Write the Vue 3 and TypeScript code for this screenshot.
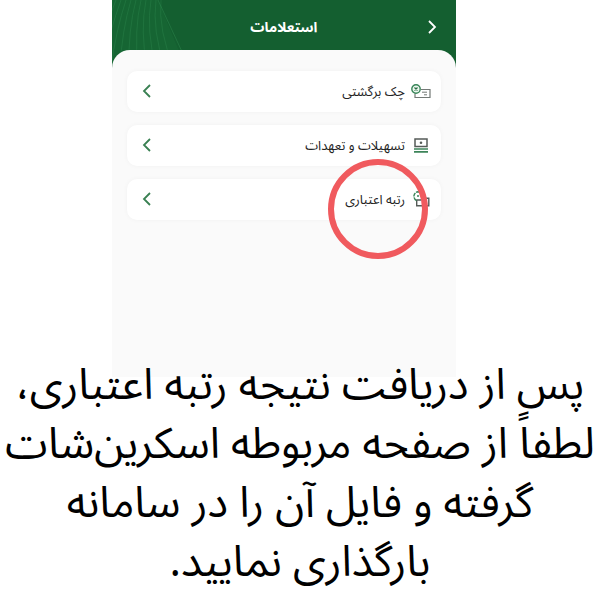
<script setup lang="ts">
type IconName = 'cheque' | 'facilities' | 'rating'

interface Inquiry {
  label: string
  icon: IconName
  highlighted: boolean
}

const inquiries: Inquiry[] = [
  { label: 'چک برگشتی', icon: 'cheque', highlighted: false },
  { label: 'تسهیلات و تعهدات', icon: 'facilities', highlighted: false },
  { label: 'رتبه اعتباری', icon: 'rating', highlighted: true },
]

const rays: number[] = Array.from({ length: 12 }, (_, i) => i)
</script>

<template>
  <main class="guide" dir="rtl" lang="fa">
    <section class="phone">
      <header class="bar">
        <svg class="rays" viewBox="0 0 80 68" aria-hidden="true">
          <path d="M0 0H46L74 68H0Z" fill="#1f7a42" fill-opacity=".22" />
          <path
            v-for="i in rays"
            :key="i"
            :d="`M${49 - i * 5} 0Q${46 - i * 6} 30 ${62 - i * 9} 68`"
            fill="none"
            stroke="#3a9a5c"
            stroke-opacity=".26"
          />
          <path d="M46 0L72 56" stroke="#3a9a5c" stroke-opacity=".35" />
        </svg>
        <button class="back" type="button" aria-label="بازگشت">
          <svg width="10" height="16" viewBox="0 0 10 16" aria-hidden="true">
            <path d="M2 2L8 8L2 14" fill="none" stroke="#fff" stroke-width="1.8" />
          </svg>
        </button>
        <h1 class="title">استعلامات</h1>
      </header>

      <nav class="sheet">
        <div v-for="item in inquiries" :key="item.icon" class="entry">
          <a class="card" href="#">
            <svg v-if="item.icon === 'cheque'" class="icon" viewBox="0 0 20 18" aria-hidden="true">
              <path d="M10 7.5H19V15.5H4V11.5" fill="none" stroke="#737976" stroke-width="1.2" />
              <path d="M11 10.2H16M13 12.8H16" stroke="#737976" />
              <circle cx="5" cy="7" r="4.2" fill="#eef8f0" stroke="#388558" stroke-width="1.4" />
              <path d="M3.5 5.5L6.5 8.5M6.5 5.5L3.5 8.5" stroke="#286b43" stroke-width="1.2" />
            </svg>
            <svg v-else-if="item.icon === 'facilities'" class="icon" viewBox="0 0 20 18" aria-hidden="true">
              <rect x="4" y="3" width="12" height="7.5" fill="none" stroke="#555b58" stroke-width="1.5" />
              <circle cx="10" cy="6.7" r="1.3" fill="#555b58" />
              <path d="M3 13H17M3 15.8H17" stroke="#3d8459" stroke-width="1.7" />
            </svg>
            <svg v-else class="icon" viewBox="0 0 20 18" aria-hidden="true">
              <path d="M5.7 9.5V15.8H17.8V8.2H11.5L10 10H6" fill="none" stroke="#555b58" stroke-width="1.4" />
              <path
                d="M5.5 10.5A4.6 4.6 0 0 1 7 1.8A4.6 4.6 0 0 1 11.6 6.5"
                fill="none"
                stroke="#388558"
                stroke-width="1.4"
                stroke-dasharray="4 0.8"
              />
              <circle cx="7" cy="6" r="1" fill="#388558" />
            </svg>
            <span class="label">{{ item.label }}</span>
            <svg class="chevron" width="10" height="16" viewBox="0 0 10 16" aria-hidden="true">
              <path d="M8 2L2 8L8 14" fill="none" stroke="#398052" stroke-width="1.8" />
            </svg>
          </a>
          <span v-if="item.highlighted" class="ring"></span>
        </div>
      </nav>
    </section>

    <p class="caption">
      پس از دریافت نتیجه رتبه اعتباری،<br />
      لطفاً از صفحه مربوطه اسکرین‌شات<br />
      گرفته و فایل آن را در سامانه<br />
      بارگذاری نمایید.
    </p>
  </main>
</template>

<style>
body {
  background: #fff;
}
</style>

<style scoped>
.guide {
  font-family: 'Noto Sans', 'Noto Sans Arabic', sans-serif;
  color: #000;
}

.phone {
  width: 57.4%;
  margin-right: 24%;
  background: linear-gradient(#145f30 0 100px, #fafafa 100px);
}

.bar {
  position: relative;
  display: grid;
  grid-template-columns: 48px 1fr 48px;
  align-items: center;
  height: 50px;
  padding-top: 4px;
  box-sizing: border-box;
}

.rays {
  position: absolute;
  left: 0;
  top: 0;
  width: 80px;
  height: 68px;
}

.back {
  display: flex;
  justify-content: center;
  padding: 0;
  border: 0;
  background: none;
  cursor: pointer;
}

.title {
  margin: 0;
  text-align: center;
  font-size: 14px;
  line-height: 24px;
  font-weight: 700;
  color: #fff;
}

.sheet {
  position: relative;
  display: flex;
  flex-direction: column;
  gap: 13px;
  min-height: 327px;
  padding: 21px 15px;
  box-sizing: border-box;
  border-radius: 18px 18px 0 0;
  background: #fafafa;
}

.entry {
  position: relative;
}

.card {
  display: flex;
  align-items: center;
  gap: 6px;
  height: 41px;
  padding: 0 10px 2px 15px;
  box-sizing: border-box;
  border-radius: 10px;
  background: #fff;
  box-shadow: 0 0 5px rgba(0, 0, 0, 0.04);
  color: #222;
  text-decoration: none;
}

.icon {
  width: 20px;
  height: 18px;
}

.label {
  flex: 1;
  font-size: 13px;
  line-height: 20px;
}

.ring {
  position: absolute;
  top: -20px;
  right: 13px;
  width: 100px;
  height: 100px;
  box-sizing: border-box;
  border: 6px solid #f05a5e;
  border-radius: 50%;
  pointer-events: none;
}

.caption {
  position: relative;
  margin: -24px 0 0;
  text-align: center;
  white-space: nowrap;
  font-size: 43px;
  line-height: 59px;
}
</style>
